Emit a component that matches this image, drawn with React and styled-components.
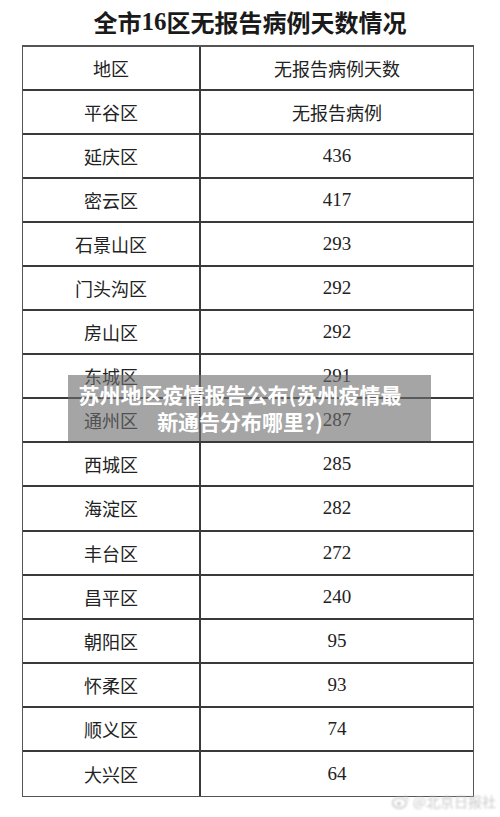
import styled, { createGlobalStyle } from "styled-components";

const GlobalStyle = createGlobalStyle`
  html, body {
    margin: 0;
    padding: 0;
    background: #fff;
  }
  body {
    font-family: "Noto Sans CJK SC", "Noto Sans", sans-serif;
  }
`;

const Page = styled.div`
  position: relative;
  width: 500px;
  height: 817px;
  overflow: hidden;
  background: #fff;
`;

const Title = styled.h1`
  margin: 0;
  height: 45px;
  display: flex;
  align-items: center;
  justify-content: center;
  font-size: 24px;
  font-weight: 700;
  color: #1a1a1a;
  padding-bottom: 2px;
  box-sizing: border-box;
`;

const Num = styled.span`
  font-family: "Liberation Serif", "Times New Roman", serif;
  font-weight: 700;
  font-size: 25px;
`;

const Table = styled.div`
  margin-left: 22px;
  width: 452px;
  display: grid;
  grid-template-columns: 178px 1fr;
  grid-auto-rows: 44.06px;
  border: 1.5px solid #555;
  border-top-width: 2px;
  box-sizing: border-box;
`;

const Cell = styled.div`
  display: flex;
  align-items: center;
  justify-content: center;
  border-bottom: ${(p) => (p.last ? "none" : "2px solid #3a3a3a")};
  border-right: ${(p) => (p.left ? "2px solid #3a3a3a" : "none")};
  color: #222;
  font-family: ${(p) =>
    p.serif
      ? '"Liberation Serif", "Times New Roman", serif'
      : '"Noto Sans CJK SC", "Noto Sans", sans-serif'};
  font-size: ${(p) => (p.serif ? "19px" : "18px")};
`;

const Overlay = styled.div`
  position: absolute;
  left: 68px;
  top: 375px;
  width: 363px;
  height: 66px;
  background: rgba(110, 110, 110, 0.62);
  display: flex;
  align-items: center;
  justify-content: flex-start;
  padding-left: 6px;
  box-sizing: border-box;
`;

const Caption = styled.p`
  margin: 0;
  width: 332px;
  text-align: center;
  color: #fff;
  font-size: 21px;
  font-weight: 700;
  line-height: 27px;
`;

const Watermark = styled.div`
  position: absolute;
  right: 4px;
  bottom: 6px;
  display: flex;
  align-items: center;
  gap: 4px;
  color: #c8c8c8;
  font-size: 14px;
  filter: blur(1.2px);
`;

const rows = [
  ["平谷区", "无报告病例"],
  ["延庆区", "436"],
  ["密云区", "417"],
  ["石景山区", "293"],
  ["门头沟区", "292"],
  ["房山区", "292"],
  ["东城区", "291"],
  ["通州区", "287"],
  ["西城区", "285"],
  ["海淀区", "282"],
  ["丰台区", "272"],
  ["昌平区", "240"],
  ["朝阳区", "95"],
  ["怀柔区", "93"],
  ["顺义区", "74"],
  ["大兴区", "64"],
];

const WeiboLogo = () => (
  <svg width="17" height="15" viewBox="0 0 16 14">
    <ellipse cx="7" cy="8.5" rx="6.5" ry="4.8" fill="none" stroke="#c8c8c8" strokeWidth="1.4" />
    <circle cx="6.5" cy="9" r="1.8" fill="#c8c8c8" />
    <path d="M11 2 a4 4 0 0 1 4 4" fill="none" stroke="#c8c8c8" strokeWidth="1.2" />
  </svg>
);

export default function App() {
  return (
    <Page>
      <GlobalStyle />
      <Title>
        全市<Num>16</Num>区无报告病例天数情况
      </Title>
      <Table>
        <Cell left>地区</Cell>
        <Cell>无报告病例天数</Cell>
        {rows.map(([name, val], i) => {
          const last = i === rows.length - 1;
          const isNum = /^\d+$/.test(val);
          return [
            <Cell key={name + "a"} left last={last}>
              {name}
            </Cell>,
            <Cell key={name + "b"} last={last} serif={isNum}>
              {val}
            </Cell>,
          ];
        })}
      </Table>
      <Overlay>
        <Caption>苏州地区疫情报告公布(苏州疫情最新通告分布哪里?)</Caption>
      </Overlay>
      <Watermark>
        <WeiboLogo />
        <span>@北京日报社</span>
      </Watermark>
    </Page>
  );
}
